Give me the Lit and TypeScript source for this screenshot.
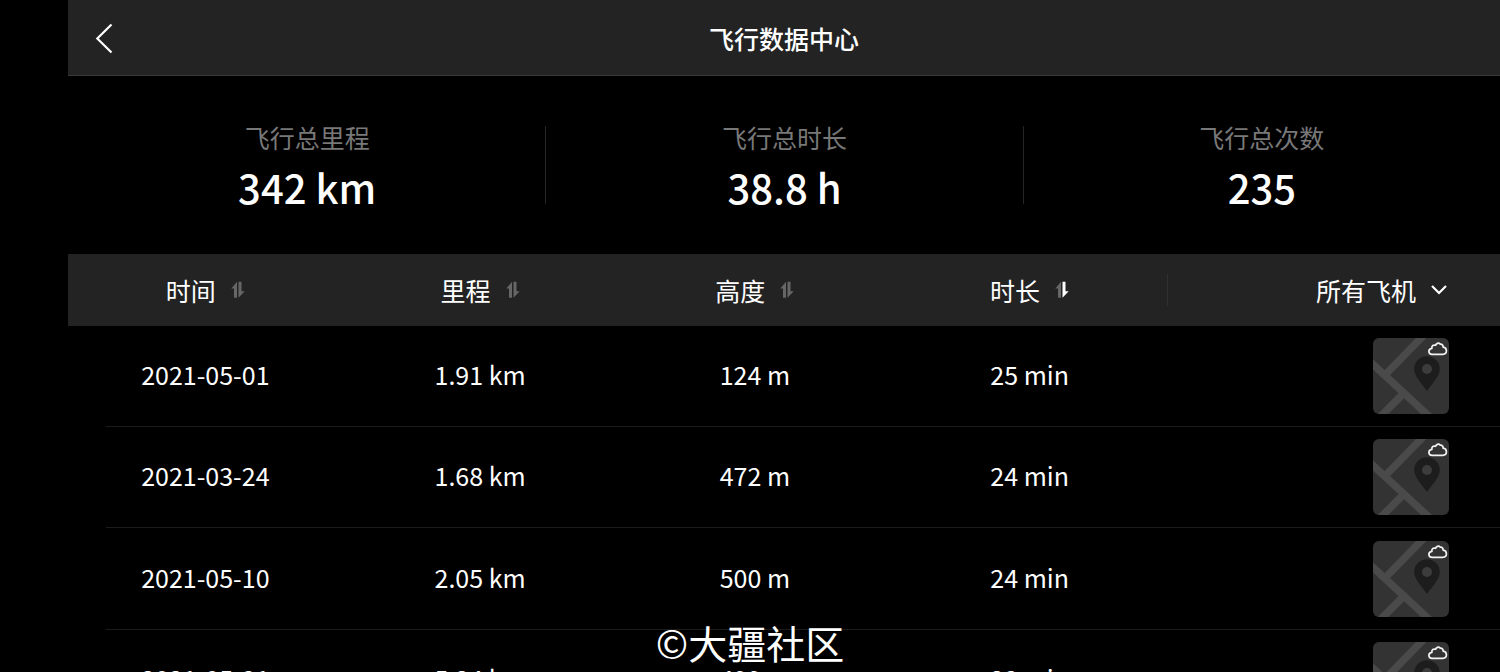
import { LitElement, html, css, svg } from "lit";
import { customElement, property, state } from "lit/decorators.js";
import { classMap } from "lit/directives/class-map.js";

type SortKey = "date" | "distance" | "height" | "duration";

interface Flight {
  date: string;
  distance: string;
  height: string;
  duration: string;
}

const TOTALS = [
  { label: "飞行总里程", value: "342 km" },
  { label: "飞行总时长", value: "38.8 h" },
  { label: "飞行总次数", value: "235" },
];

const COLUMNS: { key: SortKey; label: string }[] = [
  { key: "date", label: "时间" },
  { key: "distance", label: "里程" },
  { key: "height", label: "高度" },
  { key: "duration", label: "时长" },
];

const FLIGHTS: Flight[] = [
  { date: "2021-05-01", distance: "1.91 km", height: "124 m", duration: "25 min" },
  { date: "2021-03-24", distance: "1.68 km", height: "472 m", duration: "24 min" },
  { date: "2021-05-10", distance: "2.05 km", height: "500 m", duration: "24 min" },
  { date: "2021-05-31", distance: "5.24 km", height: "499 m", duration: "23 min" },
];

/* Pair of half arrows: ascending on the left, descending on the right. */
@customElement("sort-arrows")
export class SortArrows extends LitElement {
  @property() direction = "";

  static styles = css`
    :host {
      display: block;
      width: 14px;
      height: 18px;
    }
    svg {
      display: block;
    }
    .arrow {
      fill: #666;
    }
    .arrow.on {
      fill: #fff;
    }
  `;

  render() {
    return html`<svg width="14" height="18" viewBox="0 0 14 18" aria-hidden="true">
      <path class=${classMap({ arrow: true, on: this.direction === "asc" })} d="M6 .8v16H3V7.500H.3z" />
      <path class=${classMap({ arrow: true, on: this.direction === "desc" })} d="M7.500 16.800V.8h3v9.500h3.200z" />
    </svg>`;
  }
}

/* Map tile with a location pin and a cloud mark in its corner. */
@customElement("map-thumb")
export class MapThumb extends LitElement {
  static styles = css`
    :host {
      display: block;
      width: 76px;
      height: 76px;
      border-radius: 6px;
      overflow: hidden;
      background: #333;
    }
    svg {
      display: block;
    }
  `;

  render() {
    return html`<svg width="76" height="76" viewBox="0 0 76 76" aria-hidden="true">
      ${svg`
        <g stroke="#4a4a4a" stroke-width="7.5" fill="none">
          <path d="M-3 23.500L60 82" />
          <path d="M13 36L53-5" />
          <path d="M32 54L5 81" />
        </g>
        <path fill="#1d1d1d" d="M54 18.3c-7.200 0-12.800 5.600-12.800 12.700 0 7.500 7.800 14.500 12.800 22 5-7.500 12.800-14.500 12.800-22 0-7.100-5.600-12.700-12.800-12.700z" />
        <circle cx="54" cy="31" r="5" fill="#3c3c3c" />
        <path fill="none" stroke="#f2f2f2" stroke-width="1.700" stroke-linejoin="round"
          d="M59.300 16.300h10.500c2.100 0 3.600-1.600 3.600-3.500 0-2-1.400-3.400-3.300-3.600.2-1.800-1.200-3.200-2.800-3-.8-.9-1.900-1.200-2.900-.8-1 .4-1.500 1-1.800 1.900-2.500-.8-4.100.7-3.700 3.100-1.800.2-3 1.500-3 3.100 0 1.800 1.400 2.800 3.400 2.800z" />
      `}
    </svg>`;
  }
}

@customElement("app-root")
export class AppRoot extends LitElement {
  @state() private sortKey: SortKey = "duration";
  @state() private direction = "desc";

  static styles = css`
    :host {
      display: block;
      position: relative;
      box-sizing: border-box;
      height: 100vh;
      overflow: hidden;
      padding-left: 68px;
      background: #000;
      color: #fff;
      font-family: "Noto Sans CJK SC", sans-serif;
      font-size: 25px;
      line-height: 36px;
    }
    button,
    select {
      appearance: none;
      margin: 0;
      padding: 0;
      border: 0;
      background: none;
      color: inherit;
      font: inherit;
      cursor: pointer;
    }
    svg {
      display: block;
    }
    .bar {
      display: grid;
      grid-template-columns: 72px 1fr 72px;
      align-items: center;
      height: 75px;
      border-bottom: 1px solid #3a3a3a;
      background: #232323;
    }
    .back {
      display: flex;
      align-items: center;
      justify-content: center;
      height: 75px;
    }
    .title {
      margin: 0;
      text-align: center;
      font-size: 25px;
      font-weight: 500;
    }
    .totals {
      display: grid;
      grid-template-columns: repeat(3, 1fr);
      padding: 50px 0;
    }
    .total {
      display: flex;
      flex-direction: column;
      align-items: center;
      height: 78px;
      border-left: 1px solid #262626;
    }
    .total:first-child {
      border-left-color: transparent;
    }
    .label {
      margin-top: -7px;
      color: #787878;
    }
    .value {
      margin-top: 8px;
      font-size: 40px;
      line-height: 48px;
      font-weight: 500;
    }
    .flights {
      width: 100%;
      table-layout: fixed;
      border-collapse: separate;
      border-spacing: 0;
    }
    .last {
      width: 333px;
    }
    th,
    td {
      box-sizing: border-box;
      padding: 0;
      font-weight: 400;
      text-align: center;
      vertical-align: middle;
    }
    th {
      height: 72px;
      padding-bottom: 4px;
      background: #232323;
    }
    .sort,
    .filter {
      display: inline-flex;
      align-items: center;
      gap: 15px;
      vertical-align: middle;
    }
    .filter {
      gap: 13px;
    }
    .filter-cell {
      padding-right: 52px;
      text-align: right;
      background: linear-gradient(#303030, #303030) 0 50% / 1px 32px no-repeat #232323;
    }
    td {
      height: 101px;
      padding-bottom: 4px;
      border-bottom: 1px solid #1b1b1b;
    }
    tr:nth-child(3n) td {
      height: 102px;
    }
    .date {
      border-bottom-color: transparent;
      background: linear-gradient(#1b1b1b, #1b1b1b) 38px 100% / 100% 1px no-repeat border-box;
      background-origin: border-box;
    }
    .map {
      padding: 0 51px 0 0;
    }
    .map map-thumb {
      margin-left: auto;
    }
    .watermark {
      position: absolute;
      left: 0;
      right: 0;
      bottom: 0;
      text-align: center;
      font-size: 39px;
      line-height: 60px;
      pointer-events: none;
    }
  `;

  private sortBy(key: SortKey) {
    this.direction = this.sortKey === key && this.direction === "desc" ? "asc" : "desc";
    this.sortKey = key;
  }

  render() {
    return html`
      <header class="bar">
        <button class="back" aria-label="返回">
          <svg width="20" height="32" viewBox="0 0 20 32" fill="none" stroke="#fff" stroke-width="2.200">
            <path d="M17.500 2.500L3.300 16.500l14.200 14" />
          </svg>
        </button>
        <h1 class="title">飞行数据中心</h1>
      </header>
      <section class="totals">
        ${TOTALS.map(
          (t) => html`<div class="total">
            <span class="label">${t.label}</span>
            <strong class="value">${t.value}</strong>
          </div>`
        )}
      </section>
      <table class="flights">
        <colgroup>
          <col /><col /><col /><col /><col class="last" />
        </colgroup>
        <thead>
          <tr>
            ${COLUMNS.map(
              (c) => html`<th scope="col">
                <button class="sort" @click=${() => this.sortBy(c.key)}>
                  ${c.label}
                  <sort-arrows .direction=${this.sortKey === c.key ? this.direction : ""}></sort-arrows>
                </button>
              </th>`
            )}
            <th class="filter-cell" scope="col">
              <label class="filter">
                <select aria-label="飞机">
                  <option>所有飞机</option>
                </select>
                <svg width="18" height="18" viewBox="0 0 18 18" fill="none" stroke="#fff" stroke-width="2.200">
                  <path d="M2 5l7 7 7-7" />
                </svg>
              </label>
            </th>
          </tr>
        </thead>
        <tbody>
          ${FLIGHTS.map(
            (f) => html`<tr>
              <td class="date">${f.date}</td>
              <td>${f.distance}</td>
              <td>${f.height}</td>
              <td>${f.duration}</td>
              <td class="map"><map-thumb></map-thumb></td>
            </tr>`
          )}
        </tbody>
      </table>
      <div class="watermark">©大疆社区</div>
    `;
  }
}
